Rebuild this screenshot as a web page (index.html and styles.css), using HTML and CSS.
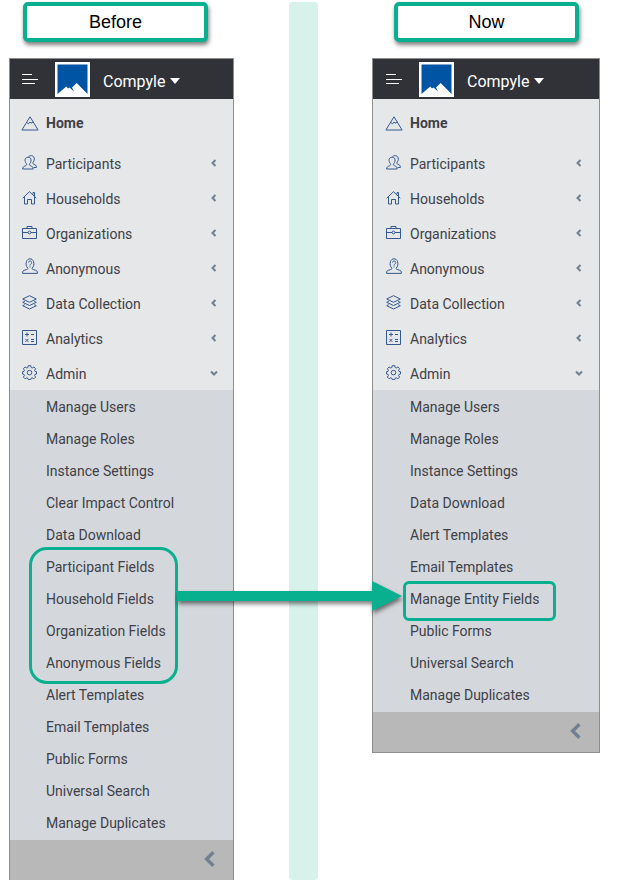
FILE: index.html
```
<!DOCTYPE html>
<html lang="en">
    <head>
        <meta charset="utf-8">
        <title>Compyle menu: before and now</title>

        <link rel="stylesheet" href="styles.css">
    </head>

    <body>
        <!-- Icons shared by both menus -->
        <svg class="sprite" aria-hidden="true">
            <symbol id="bars" viewBox="0 0 16 11"><path d="M0 .5h10M0 5.5h16M0 9.5h13"/></symbol>
            <symbol id="logo" viewBox="0 0 35 35">
                <path fill="#fff" d="M0 0h35v35H0z"/>
                <path fill="#0054a4" d="M2.500 2.500h30V32L21.700 21 17 25.500l2 4-4.500-4-1.500 1-1.700-2L2.500 32z"/>
            </symbol>
            <symbol id="caret" viewBox="0 0 10 6"><path d="M0 0h10L5 6z"/></symbol>
            <symbol id="home" viewBox="0 0 18 15"><path d="M9 .8L.9 14h16.200zM5.800 6.500l1.700 1.300 1.500-1.800 1 1.200 2.400-1.400"/></symbol>
            <symbol id="people" viewBox="0 0 15 15">
                <path d="M.6 14h10.600c.1-2-1-2.500-3-3.400-1-.5-1-1.300-.3-2.100C9 7.300 9.300 5.200 8.800 3.900 8.200 1.800 3.900 1.600 3.200 4.100c-.4 1.600.1 3.300 1.100 4.400.6.8.4 1.600-.5 2.100-2 .9-3.200 1.400-3.200 3.400z"/>
                <path d="M6.500 1.800C8-.1 11.700.4 12.200 3c.3 1.500-.1 3-1 4.100-.7 1-.4 1.600.6 2.100 1.800.8 2.700 1.200 2.600 3.300h-2.600"/>
            </symbol>
            <symbol id="house" viewBox="0 0 15 15"><path d="M.7 8.200l6.800-6.500 6.800 6.500M2.500 6.800v7.200h3V9.500h4V14h3V6.800M11 4.500V2.500h1.500V6"/></symbol>
            <symbol id="case" viewBox="0 0 15 15"><path d="M.5 3.500h14v10H.5zM5 3.500v-2h5v2M.5 7.500H6M9 7.500h5.500"/><circle cx="7.500" cy="7.500" r="1.400"/></symbol>
            <symbol id="anon" viewBox="0 0 16 16"><path d="M.6 15.400h14.800c.1-2.300-.5-2.900-2.200-3.300-2.300-.6-3.400-1-3.100-2C12 8.600 12.300 6 11.500 3.500 10.500-.1 5.500-.1 4.500 3.500 3.700 6 4 8.600 5.900 10.100c.3 1-.8 1.400-3.100 2-1.700.4-2.300 1-2.200 3.300zM6.500 4.500c0-2 3.200-2 3.200 0C9.700 6 8 6 8 7.500M8 8.500v1"/></symbol>
            <symbol id="layers" viewBox="0 0 15 15"><path d="M7.500.7l6.800 3.300-6.800 3.300L.7 4zM2.800 6.300L.7 7.300l6.800 3.200 6.800-3.200-2.100-1M2.800 9.700l-2.100 1 6.800 3.300 6.800-3.300-2.100-1"/></symbol>
            <symbol id="calc" viewBox="0 0 15 15"><path d="M.5 .5h14v14H.5zM3 4.500h4M5 2.500v4M9 4.500h3M3.400 8.900l3 3M6.400 8.900l-3 3M9 9.500h3M9 11.500h3"/></symbol>
            <symbol id="gear" viewBox="0 0 15 15"><path d="M6.200.7h2.600l.4 1.900 1 .4 1.700-1 1.700 1.700-1 1.700.4 1 1.500.3v2.300l-1.500.4-.4 1 1 1.700-1.700 1.700-1.700-1-1 .4-.4 1.400H6.200l-.4-1.400-1-.4-1.700 1-1.700-1.700 1-1.700-.4-1L.6 9V6.700L2 6.400l.4-1-1-1.700L3.100 2l1.700 1 1-.4z"/><circle cx="7.500" cy="7.600" r="2.300"/></symbol>
            <symbol id="left" viewBox="0 0 8 8"><path d="M5.500 1L2.500 4l3 3"/></symbol>
            <symbol id="down" viewBox="0 0 8 8"><path d="M1 2.500l3 3 3-3"/></symbol>
        </svg>

        <main class="compare">
            <section class="side before">
                <h2 class="tag">Before</h2>
                <div class="panel">
                    <header class="topbar">
                        <button class="bars" type="button" aria-label="Toggle menu"><svg><use href="#bars"/></svg></button>
                        <svg class="logo"><use href="#logo"/></svg>
                        <button class="brand" type="button">Compyle <svg><use href="#caret"/></svg></button>
                    </header>
                    <nav>
                        <ul class="menu">
                            <li><a class="home" href="#"><svg class="icon"><use href="#home"/></svg>Home</a></li>
                            <li><a href="#"><svg class="icon"><use href="#people"/></svg>Participants<svg class="chevron"><use href="#left"/></svg></a></li>
                            <li><a href="#"><svg class="icon"><use href="#house"/></svg>Households<svg class="chevron"><use href="#left"/></svg></a></li>
                            <li><a href="#"><svg class="icon"><use href="#case"/></svg>Organizations<svg class="chevron"><use href="#left"/></svg></a></li>
                            <li><a href="#"><svg class="icon tall"><use href="#anon"/></svg>Anonymous<svg class="chevron"><use href="#left"/></svg></a></li>
                            <li><a href="#"><svg class="icon"><use href="#layers"/></svg>Data Collection<svg class="chevron"><use href="#left"/></svg></a></li>
                            <li><a href="#"><svg class="icon"><use href="#calc"/></svg>Analytics<svg class="chevron"><use href="#left"/></svg></a></li>
                            <li><a href="#"><svg class="icon"><use href="#gear"/></svg>Admin<svg class="chevron"><use href="#down"/></svg></a></li>
                        </ul>
                        <ul class="submenu">
                            <li><a href="#">Manage Users</a></li>
                            <li><a href="#">Manage Roles</a></li>
                            <li><a href="#">Instance Settings</a></li>
                            <li><a href="#">Clear Impact Control</a></li>
                            <li><a href="#">Data Download</a></li>
                            <li class="marked">
                                <ul>
                                    <li><a href="#">Participant Fields</a></li>
                                    <li><a href="#">Household Fields</a></li>
                                    <li><a href="#">Organization Fields</a></li>
                                    <li><a href="#">Anonymous Fields</a></li>
                                </ul>
                            </li>
                            <li><a href="#">Alert Templates</a></li>
                            <li><a href="#">Email Templates</a></li>
                            <li><a href="#">Public Forms</a></li>
                            <li><a href="#">Universal Search</a></li>
                            <li><a href="#">Manage Duplicates</a></li>
                        </ul>
                    </nav>
                    <button class="collapse" type="button" aria-label="Collapse menu"><svg><use href="#left"/></svg></button>
                </div>
            </section>

            <div class="divider"></div>

            <section class="side now">
                <h2 class="tag">Now</h2>
                <div class="panel">
                    <header class="topbar">
                        <button class="bars" type="button" aria-label="Toggle menu"><svg><use href="#bars"/></svg></button>
                        <svg class="logo"><use href="#logo"/></svg>
                        <button class="brand" type="button">Compyle <svg><use href="#caret"/></svg></button>
                    </header>
                    <nav>
                        <ul class="menu">
                            <li><a class="home" href="#"><svg class="icon"><use href="#home"/></svg>Home</a></li>
                            <li><a href="#"><svg class="icon"><use href="#people"/></svg>Participants<svg class="chevron"><use href="#left"/></svg></a></li>
                            <li><a href="#"><svg class="icon"><use href="#house"/></svg>Households<svg class="chevron"><use href="#left"/></svg></a></li>
                            <li><a href="#"><svg class="icon"><use href="#case"/></svg>Organizations<svg class="chevron"><use href="#left"/></svg></a></li>
                            <li><a href="#"><svg class="icon tall"><use href="#anon"/></svg>Anonymous<svg class="chevron"><use href="#left"/></svg></a></li>
                            <li><a href="#"><svg class="icon"><use href="#layers"/></svg>Data Collection<svg class="chevron"><use href="#left"/></svg></a></li>
                            <li><a href="#"><svg class="icon"><use href="#calc"/></svg>Analytics<svg class="chevron"><use href="#left"/></svg></a></li>
                            <li><a href="#"><svg class="icon"><use href="#gear"/></svg>Admin<svg class="chevron"><use href="#down"/></svg></a></li>
                        </ul>
                        <ul class="submenu">
                            <li><a href="#">Manage Users</a></li>
                            <li><a href="#">Manage Roles</a></li>
                            <li><a href="#">Instance Settings</a></li>
                            <li><a href="#">Data Download</a></li>
                            <li><a href="#">Alert Templates</a></li>
                            <li><a href="#">Email Templates</a></li>
                            <li class="marked"><a href="#">Manage Entity Fields</a></li>
                            <li><a href="#">Public Forms</a></li>
                            <li><a href="#">Universal Search</a></li>
                            <li><a href="#">Manage Duplicates</a></li>
                        </ul>
                    </nav>
                    <button class="collapse" type="button" aria-label="Collapse menu"><svg><use href="#left"/></svg></button>
                </div>
            </section>

            <div class="arrow"></div>
        </main>
    </body>
</html>
```
FILE: styles.css
```
*, *::before, *::after{
    box-sizing: border-box;
}

body{
    margin: 0;
    background: white;
    font-family: Roboto, "Liberation Sans", sans-serif;
    font-size: 14px;
    color: #3f4047;
}

ul{
    list-style: none;
    margin: 0;
    padding: 0;
}

a{
    color: inherit;
    text-decoration: none;
}

button{
    border: 0;
    padding: 0;
    background: none;
    font: inherit;
    color: inherit;
    cursor: pointer;
}

svg{
    display: block;
    flex: none;
}

.sprite{
    display: none;
}

.compare{
    position: relative;
    display: grid;
    grid-template-columns: 113fr 29px 114fr;
    column-gap: 54px;
    padding: 2px 18px 0 9px;
}

.side{
    display: flex;
    flex-direction: column;
    gap: 16px;
}

.tag{
    width: 185px;
    height: 40px;
    margin: 0 auto 0 14px;
    border: 4px solid #09b090;
    border-radius: 5px;
    background: white;
    box-shadow: 1px 3px 4px rgba(0, 0, 0, 0.5);
    color: black;
    font: 18px/32px "Liberation Sans", Arial, sans-serif;
    text-align: center;
}

.now .tag{
    margin-left: 22px;
}

.divider{
    border-radius: 4px;
    background: #d7f1eb;
}

.panel{
    border: 1px solid #8e8e8f;
    background: #e5e7e9;
}

.before .panel{
    margin-right: 1px;
    border-bottom: 0;
}

/* Top bar */
.topbar{
    display: flex;
    align-items: center;
    height: 40px;
    padding-left: 12px;
    background: #313238;
    color: white;
}

.now .topbar{
    padding-left: 13px;
}

.bars svg{
    width: 16px;
    height: 11px;
    stroke: white;
}

.logo{
    width: 35px;
    height: 35px;
    margin: 0 13px 0 17px;
}

.brand{
    display: flex;
    align-items: center;
    gap: 5px;
    padding-top: 4px;
    font-size: 16px;
}

.brand svg{
    width: 10px;
    height: 6px;
    fill: white;
}

/* Main menu */
.menu{
    display: flex;
    flex-direction: column;
    gap: 4px;
    padding-bottom: 1px;
}

.menu a{
    display: flex;
    align-items: center;
    height: 31px;
    padding: 0 15px 0 12px;
}

.now .menu a{
    padding: 0 16px 0 13px;
}

.menu .home, .now .menu .home{
    height: 45px;
    padding-top: 3px;
    font-weight: bold;
}

.icon{
    width: 15px;
    height: 15px;
    margin: 0 9px 2px 0;
    fill: none;
    stroke: #34588f;
}

.home .icon{
    width: 18px;
    margin: 0 7px 0 -1px;
}

.tall{
    width: 16px;
    height: 16px;
    margin: 0 8px 5px 0;
}

.chevron{
    width: 8px;
    height: 8px;
    margin: 0 0 2px auto;
    fill: none;
    stroke: #718091;
    stroke-width: 2;
}

/* Admin entries */
.submenu{
    padding: 1px 0;
    background: #d4d8dd;
}

.submenu a{
    display: block;
    padding-left: 36px;
    line-height: 32px;
}

.now .submenu a{
    padding-left: 37px;
}

.marked{
    position: relative;
}

.marked::after{
    content: "";
    position: absolute;
    top: -4px;
    bottom: -5px;
    left: 19px;
    width: 149px;
    border: 3px solid #09b090;
    border-radius: 18px;
    pointer-events: none;
}

.now .marked::after{
    top: -2px;
    bottom: -6px;
    left: 30px;
    width: 153px;
    border-radius: 6px;
}

.collapse{
    display: flex;
    align-items: center;
    justify-content: flex-end;
    width: 100%;
    height: 40px;
    padding: 0 14px 2px 0;
    background: #b8b8b8;
}

.collapse svg{
    width: 18px;
    height: 18px;
    fill: none;
    stroke: #718091;
    stroke-width: 1.5;
}

/* Arrow from the old fields to the new entry */
.arrow{
    position: absolute;
    grid-column: 1 / 3;
    top: 581px;
    left: 168px;
    right: -84px;
    height: 30px;
    filter: drop-shadow(1px 3px 2px rgba(0, 0, 0, 0.5));
}

.arrow::before{
    content: "";
    position: absolute;
    inset: 10px 29px 10px 0;
    background: #09b090;
}

.arrow::after{
    content: "";
    position: absolute;
    top: 0;
    right: 0;
    border: solid transparent;
    border-width: 15px 0 15px 30px;
    border-left-color: #09b090;
}
```
